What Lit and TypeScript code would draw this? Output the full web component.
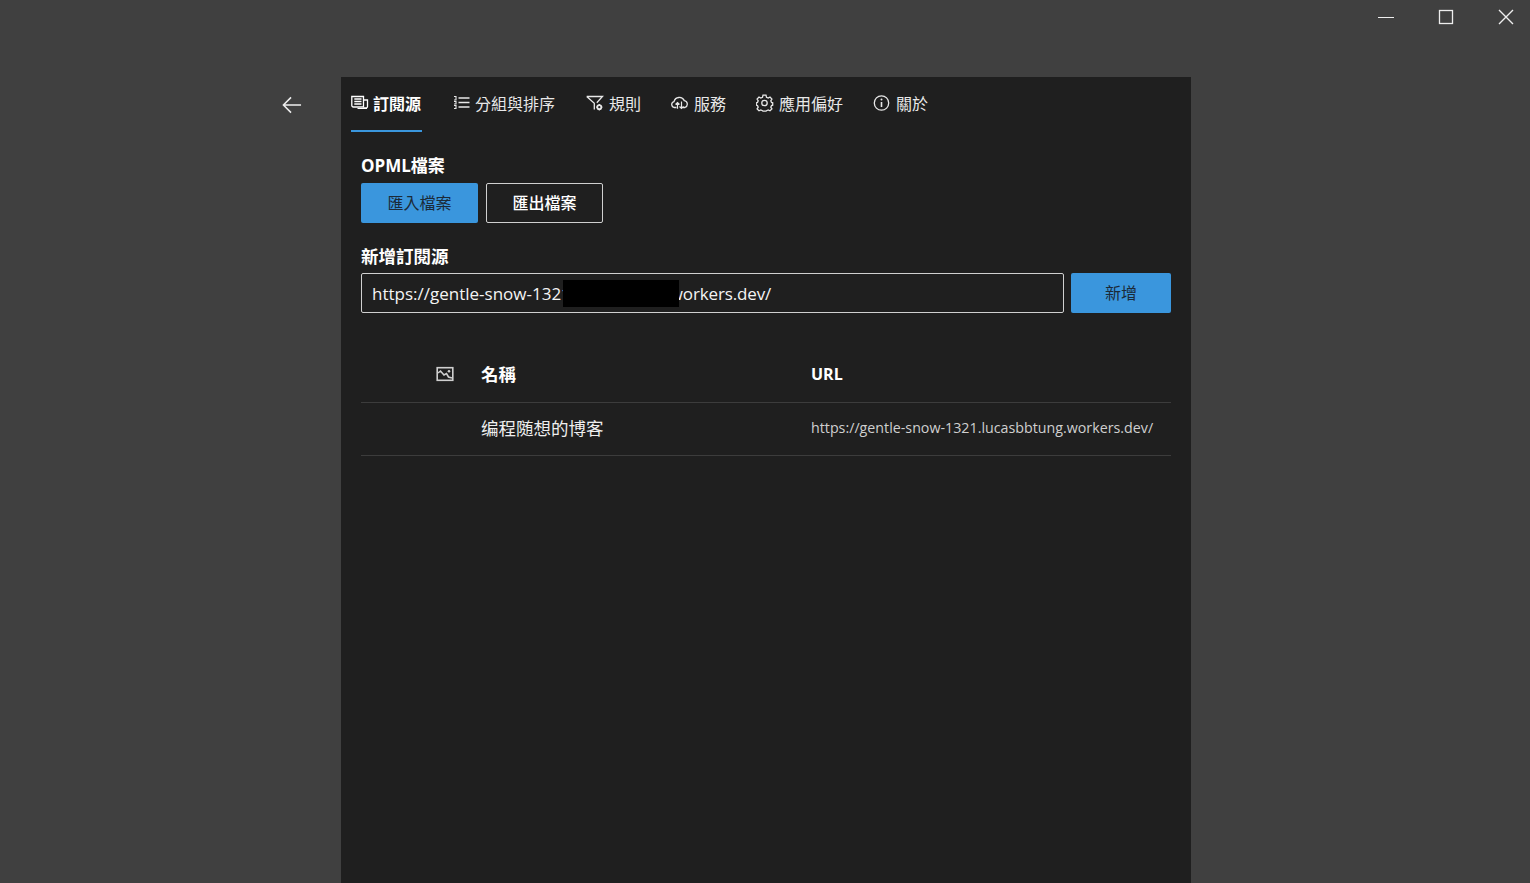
import { LitElement, html, css, svg } from "lit";
import { customElement } from "lit/decorators.js";

const i = (body: unknown, w = 18, h = 18, vb = "0 0 18 18") =>
  html`<svg class="ico" width=${w} height=${h} viewBox=${vb} fill="none" stroke="currentColor" stroke-width="1.3">${body}</svg>`;

const tabs = [
  { label: "訂閱源", active: true, icon: i(svg`<path d="M.8 2.5H12.5V13H2.3A1.5 1.5 0 0 1 .8 11.5Z"/><path d="M3.3 5H10.5M3.3 7.5H10.5M3.3 10H10.5"/><path d="M12.5 6H16.5V12.5A1.5 1.5 0 0 1 15 14H12.5" /><path d="M6.5 14.5H16" stroke-width="1"/>`) },
  { label: "分組與排序", icon: i(svg`<path d="M5.5 4H16.5M5.5 8.5H16.5M5.5 13H16.5"/><path d="M1 2.5H3V6H1M1 7.5H3V10H1M1 11.5H3V14.5H1" stroke-width="1.1"/>`) },
  { label: "規則", icon: i(svg`<path d="M.7 2.5H16.5L10.8 8.8M8.3 15.5V9.2L.7 2.5"/><circle cx="13.3" cy="13.2" r="2" stroke-width="1.7"/><path d="M13.3 10V11M13.3 15.4V16.4M10.2 13.2H11.2M15.4 13.2H16.4" stroke-width="1.2"/>`) },
  { label: "服務", icon: i(svg`<path d="M5.5 13.5H3.5A3 3 0 0 1 3 7.6 5.5 5.5 0 0 1 13.3 6.6 3.6 3.6 0 0 1 14 13.5H12"/><path d="M6.5 14.8V8.5M4.5 10.5 6.5 8.5 8.5 10.5M10.5 7.5V14.5M8.5 12.5 10.5 14.5 12.5 12.5" stroke-width="1.2"/>`) },
  { label: "應用偏好", icon: i(svg`<circle cx="8.5" cy="9" r="2.7"/><path d="M7 1.2H10L10.5 3.3 12.2 4 14 3 15.9 5 14.8 6.8 15.5 8.4 16.7 8.8V11.2L15.5 11.6 14.8 13.2 15.9 15 14 16.8 12.2 16 10.5 16.7 10 17.2H7L6.5 16.7 4.8 16 3 16.8 1.1 15 2.2 13.2 1.5 11.6 .3 11.2V8.8L1.5 8.4 2.2 6.8 1.1 5 3 3 4.8 4 6.5 3.3Z"/>`) },
  { label: "關於", icon: i(svg`<circle cx="8.5" cy="9" r="7.2"/><path d="M8.5 8V13" stroke-width="1.6"/><circle cx="8.5" cy="5.6" r="1" fill="currentColor" stroke="none"/>`) },
];

@customElement("app-root")
export class AppRoot extends LitElement {
  static styles = css`
    :host {
      display: block;
      height: 883px;
      overflow: hidden;
      background: #404040;
      color: #fff;
      font-family: "Open Sans", "Noto Sans CJK TC", sans-serif;
    }
    .ico { display: block; flex: none; }
    .titlebar { display: flex; justify-content: flex-end; gap: 12px; height: 34px; color: #eee; }
    .wc { width: 48px; display: flex; align-items: center; justify-content: center; }
    .stage { display: flex; padding: 43px 0 0 282px; }
    .back { width: 59px; height: 56px; flex: none; color: #eee; padding-top: 18px; box-sizing: border-box; }
    .panel { width: 850px; height: 806px; background: #1f1f1f; box-sizing: border-box; padding: 0 20px; }
    .tabs { display: flex; gap: 30px; margin: 0 0 0 -10px; height: 55px; }
    .tab { display: flex; gap: 5px; align-items: center; height: 55px; box-sizing: border-box; font-size: 16px; color: #e8e8e8; padding-bottom: 3px; position: relative; }
    .tab:nth-child(-n + 2) { gap: 4px; margin-right: 1px; }
    .tab.on { font-weight: 600; color: #fff; padding-right: 1px; }
    .tab.on::after { content: ""; position: absolute; left: 0; right: 0; bottom: 0; height: 2px; background: #3a96dd; }
    .h { font-size: 17px; font-weight: 700; line-height: 24px; height: 24px; }
    .h1 { margin-top: 22px; }
    .h2 { margin-top: 21px; font-size: 17.5px; }
    .btns { display: flex; gap: 8px; margin-top: 5px; }
    .btn { width: 117px; height: 40px; display: flex; align-items: center; justify-content: center; border-radius: 2px; font-size: 16px; box-sizing: border-box; padding-bottom: 2px; }
    .primary { background: #3a96dd; color: #1b2a38; }
    .outline { border: 1px solid #d0d0d0; font-weight: 500; color: #fff; }
    .add { display: flex; gap: 7px; margin-top: 5px; }
    .input { flex: 1; height: 40px; border: 1px solid #d0d0d0; border-radius: 2px; box-sizing: border-box; padding: 0 10px; display: flex; align-items: center; font-size: 17px; position: relative; color: #f4f4f4; white-space: pre; }
    .hidden { letter-spacing: -0.52px; }
    .tail { letter-spacing: -0.15px; }
    .redact { position: absolute; left: 201px; top: 6px; width: 116px; height: 27px; background: #000; }
    .add .btn { width: 100px; }
    .table { margin-top: 32px; }
    .row { display: grid; grid-template-columns: 120px 330px 1fr; align-items: center; border-bottom: 1px solid #3c3c3c; }
    .head { height: 57px; font-size: 16px; font-weight: 700; }
    .cjk { font-size: 17.5px; }
    .body { height: 53px; padding-bottom: 4px; box-sizing: border-box; }
    .img { padding-left: 75px; color: #cfcfcf; }
    .name { font-size: 17.5px; color: #eee; }
    .url { font-size: 14.25px; color: #cfcfcf; white-space: nowrap; }
  `;

  render() {
    return html`
      <div class="titlebar">
        <div class="wc">${i(svg`<path d="M1 6.5H17" stroke-width="1"/>`, 18, 12, "0 0 18 12")}</div>
        <div class="wc">${i(svg`<rect x="2.5" y="2.5" width="13" height="13" stroke-width="1.3"/>`)}</div>
        <div class="wc">${i(svg`<path d="M2 2 16 16M16 2 2 16" stroke-width="1.4"/>`)}</div>
      </div>
      <div class="stage">
        <div class="back">${i(svg`<path d="M1.5 10H20M9.5 2 1.5 10 9.5 18" stroke-width="1.6"/>`, 20, 20, "0 0 21 20")}</div>
        <div class="panel">
          <div class="tabs">
            ${tabs.map((t) => html`<div class="tab ${t.active ? "on" : ""}">${t.icon}<span>${t.label}</span></div>`)}
          </div>
          <div class="h h1">OPML檔案</div>
          <div class="btns">
            <div class="btn primary">匯入檔案</div>
            <div class="btn outline">匯出檔案</div>
          </div>
          <div class="h h2">新增訂閱源</div>
          <div class="add">
            <div class="input"><span>https://gentle-snow-132</span><span class="hidden">1.lucasbbtung.</span><span class="tail">workers.dev/</span><div class="redact"></div></div>
            <div class="btn primary">新增</div>
          </div>
          <div class="table">
            <div class="row head">
              <div class="img">${i(svg`<rect x="1.2" y="2.7" width="15.6" height="12.6" stroke-width="1.6"/><path d="M2 8 4.5 6 8 10 10.5 8.5 12.5 12 16 13" stroke-width="1.6"/><circle cx="13" cy="6.3" r="1.3" fill="currentColor" stroke="none"/>`)}</div>
              <div class="cjk">名稱</div>
              <div>URL</div>
            </div>
            <div class="row body">
              <div></div>
              <div class="name">编程随想的博客</div>
              <div class="url">https://gentle-snow-1321.lucasbbtung.workers.dev/</div>
            </div>
          </div>
        </div>
      </div>
    `;
  }
}
